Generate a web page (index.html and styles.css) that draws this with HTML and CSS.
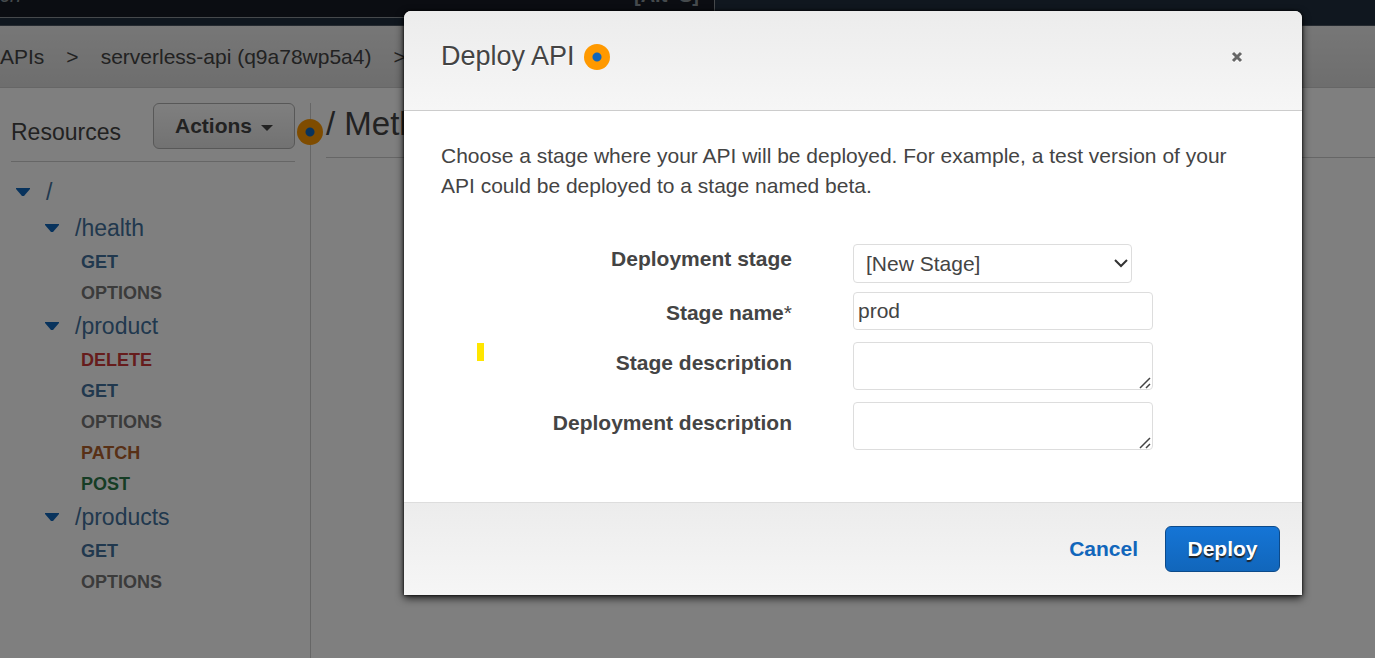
FILE: index.html
```html
<!DOCTYPE html>
<html lang="en">
<head>
<meta charset="utf-8">
<title>Deploy API</title>
<link rel="stylesheet" href="styles.css">
</head>
<body>
<div class="page">
  <header class="topbar">
    <div class="search"><em>ch</em><span class="shortcut">[Alt+S]</span></div>
  </header>
  <nav class="crumbs">
    <a href="#">APIs</a><span>&gt;</span><a href="#">serverless-api (q9a78wp5a4)</a><span>&gt;</span>
  </nav>
  <div class="main">
    <aside class="sidebar">
      <div class="side-head">
        <h2>Resources</h2>
        <button class="actions" type="button">Actions <svg width="12" height="6" viewBox="0 0 12 6"><path d="M0 0h12L6 6z" fill="currentColor"/></svg></button>
      </div>
      <ul class="tree">
        <li class="res root"><svg class="caret" viewBox="0 0 14 8"><path d="M0 0h14v1L8 8H6L0 1z"/></svg><a href="#">/</a></li>
        <li class="res"><svg class="caret" viewBox="0 0 14 8"><path d="M0 0h14v1L8 8H6L0 1z"/></svg><a href="#">/health</a></li>
        <li class="method get"><a href="#">GET</a></li>
        <li class="method options"><a href="#">OPTIONS</a></li>
        <li class="res"><svg class="caret" viewBox="0 0 14 8"><path d="M0 0h14v1L8 8H6L0 1z"/></svg><a href="#">/product</a></li>
        <li class="method delete"><a href="#">DELETE</a></li>
        <li class="method get"><a href="#">GET</a></li>
        <li class="method options"><a href="#">OPTIONS</a></li>
        <li class="method patch"><a href="#">PATCH</a></li>
        <li class="method post"><a href="#">POST</a></li>
        <li class="res"><svg class="caret" viewBox="0 0 14 8"><path d="M0 0h14v1L8 8H6L0 1z"/></svg><a href="#">/products</a></li>
        <li class="method get"><a href="#">GET</a></li>
        <li class="method options"><a href="#">OPTIONS</a></li>
      </ul>
    </aside>
    <section class="content">
      <span class="dot dot-divider"></span>
      <h1>/ Methods</h1>
    </section>
  </div>
</div>

<div class="overlay">
  <form class="modal" role="dialog" aria-labelledby="dialog-title">
    <header class="modal-head">
      <h2 id="dialog-title">Deploy API</h2>
      <span class="dot"></span>
      <button class="close" type="button" aria-label="Close"><svg width="12" height="12" viewBox="0 0 12 12"><path d="M2 2l8 8M10 2l-8 8" stroke="currentColor" stroke-width="3"/></svg></button>
    </header>
    <div class="modal-body">
      <span class="marker"></span>
      <p>Choose a stage where your API will be deployed. For example, a test version of your API could be deployed to a stage named beta.</p>
      <div class="fields">
        <label for="stage">Deployment stage</label>
        <div class="field select-field">
          <select id="stage"><option>[New Stage]</option></select>
          <svg class="chevron" width="14" height="9" viewBox="0 0 14 9"><path d="M1 1l6 6 6-6" fill="none" stroke="#333" stroke-width="2"/></svg>
        </div>
        <label for="name">Stage name<span class="required">*</span></label>
        <div class="field"><input id="name" type="text" value="prod"></div>
        <label for="stage-desc">Stage description</label>
        <div class="field"><textarea id="stage-desc"></textarea><svg class="grip" width="12" height="12" viewBox="0 0 12 12"><path d="M1 11L11 1M7 11l4-4" stroke="#444" stroke-width="1.5"/></svg></div>
        <label for="deploy-desc">Deployment description</label>
        <div class="field"><textarea id="deploy-desc"></textarea><svg class="grip" width="12" height="12" viewBox="0 0 12 12"><path d="M1 11L11 1M7 11l4-4" stroke="#444" stroke-width="1.5"/></svg></div>
      </div>
    </div>
    <footer class="modal-foot">
      <button class="cancel" type="button">Cancel</button>
      <button class="deploy" type="button">Deploy</button>
    </footer>
  </form>
</div>
</body>
</html>
```

FILE: styles.css
```css
* { box-sizing: border-box; }
body {
  margin: 0;
  overflow: hidden;
  font-family: "Liberation Sans", Arial, sans-serif;
  font-size: 21px;
  color: #444;
  background: #fff;
}
h1, h2, p, ul { margin: 0; padding: 0; font-weight: normal; }
a { color: inherit; text-decoration: none; }
button, input, select, textarea { font: inherit; color: inherit; }
svg { display: block; }

.page { display: flex; flex-direction: column; min-height: 100vh; }

.topbar { height: 26px; background: #202e3e; border-bottom: 1px solid #4a5561; }
.search {
  display: flex;
  justify-content: space-between;
  align-items: flex-end;
  width: 52%;
  height: 18px;
  padding: 0 15px 10px 0;
  border-right: 1px solid #8d9299;
  border-bottom: 1px solid #8d9299;
  background: #161b24;
  color: #8a949b;
  font-size: 20px;
  line-height: 24px;
}
.shortcut { font-weight: bold; }

.crumbs {
  display: flex;
  align-items: center;
  gap: 22px;
  height: 62px;
  background: linear-gradient(#eee, #dcdcdc);
  border-bottom: 1px solid #ccc;
}

.main { display: flex; flex: 1; padding-top: 15px; }
.sidebar { width: 310px; padding: 0 15px 0 11px; }
.side-head {
  display: flex;
  justify-content: space-between;
  align-items: center;
  height: 59px;
  padding-bottom: 12px;
  border-bottom: 1px solid #ccc;
}
.side-head h2 { font-size: 23px; padding-top: 12px; }
.actions {
  display: flex;
  align-items: center;
  gap: 9px;
  height: 46px;
  padding: 0 21px;
  border: 1px solid #b0b0b0;
  border-radius: 6px;
  background: linear-gradient(#fff, #e4e4e4);
  font-weight: bold;
}
.actions svg { margin-top: 3px; }
.tree { list-style: none; padding-top: 12px; }
.res {
  display: flex;
  align-items: center;
  gap: 16px;
  height: 36px;
  padding-left: 34px;
  font-size: 23px;
  color: #42719c;
}
.root { padding-left: 5px; }
.caret { width: 14px; height: 8px; fill: #1166bb; }
.method {
  height: 31px;
  padding-left: 70px;
  font-size: 18px;
  line-height: 32px;
  font-weight: bold;
}
.get { color: #42719c; }
.options { color: #777; }
.delete { color: #cc3939; }
.patch { color: #b0602c; }
.post { color: #2c7a4a; }

.content { position: relative; flex: 1; border-left: 1px solid #ccc; padding-left: 15px; }
.content h1 {
  height: 55px;
  border-bottom: 1px solid #ccc;
  font-size: 33px;
  line-height: 41px;
}
.dot {
  width: 26px;
  height: 26px;
  border-radius: 50%;
  background: radial-gradient(circle, #1166bb 4px, #ff9900 5px);
}
.dot-divider { position: absolute; left: -14px; top: 16px; }

.overlay {
  position: absolute;
  inset: 0;
  display: flex;
  align-items: flex-start;
  padding: 11px 73px 0 404px;
  background: rgba(0, 0, 0, 0.5);
}
.modal {
  flex: 1;
  border-radius: 7px 7px 0 0;
  background: #fff;
  box-shadow: 0 3px 9px rgba(0, 0, 0, 0.8), 0 0 3px #000;
}
.modal-head {
  display: flex;
  align-items: center;
  gap: 9px;
  height: 100px;
  padding: 0 59px 8px 37px;
  border-bottom: 1px solid #ccc;
  border-radius: 7px 7px 0 0;
  background: linear-gradient(#ececec, #f6f6f6);
  text-shadow: 0 1px 0 #fff;
}
.modal-head h2 { font-size: 27px; }
.close {
  margin-left: auto;
  padding: 0;
  border: 0;
  background: none;
  color: #666;
  filter: drop-shadow(0 1px 0 #fff);
}
.modal-body { position: relative; padding: 30px 60px 52px 37px; }
.modal-body p { line-height: 30px; }
.marker {
  position: absolute;
  left: 73px;
  top: 232px;
  width: 7px;
  height: 18px;
  background: #ffe600;
}
.fields {
  display: grid;
  grid-template-columns: 351px 300px;
  column-gap: 61px;
  row-gap: 12px;
  padding-top: 43px;
}
.fields label { text-align: right; font-weight: bold; line-height: 30px; padding-top: 6px; }
.fields label:first-child { padding-top: 0; }
.required { font-weight: normal; }
.field { position: relative; }
.select-field { width: 279px; margin-bottom: -3px; }
.field select, .field input, .field textarea {
  display: block;
  width: 100%;
  height: 38px;
  border: 1px solid #ddd;
  border-radius: 4px;
  background: #fff;
  padding: 0 4px;
}
.field select { appearance: none; height: 39px; padding: 0 12px; }
.field textarea { height: 48px; resize: none; }
.chevron { position: absolute; right: 4px; top: 15px; }
.grip { position: absolute; right: 2px; bottom: 1px; }

.modal-foot {
  display: flex;
  justify-content: flex-end;
  align-items: center;
  gap: 27px;
  height: 93px;
  padding: 0 22px;
  border-top: 1px solid #ddd;
  background: linear-gradient(#ececec, #f6f6f6);
}
.cancel, .deploy { font-weight: bold; }
.cancel { padding: 0; border: 0; background: none; color: #1166bb; }
.deploy {
  min-width: 115px;
  height: 46px;
  padding: 0 20px;
  border: 1px solid #0c4a8a;
  border-radius: 6px;
  background: linear-gradient(#1575d6, #1166bb);
  color: #fff;
  text-shadow: 0 2px 1px #222;
}
```
